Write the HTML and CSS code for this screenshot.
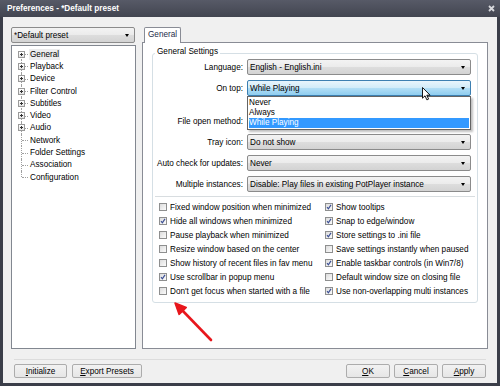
FILE: index.html
```html
<!DOCTYPE html>
<html>
<head>
<meta charset="utf-8">
<title>Preferences</title>
<link rel="stylesheet" href="styles.css">
</head>
<body>
<div class="window">
  <div class="titlebar">
    <span class="title">Preferences - *Default preset</span>
    <svg class="close" viewBox="0 0 7 7" width="7" height="7"><path d="M1 1L6 6M6 1L1 6" stroke="#d8d9dd" stroke-width="1.8"/></svg>
  </div>
  <div class="client">
    <div class="main">
      <div class="left">
        <div class="combo"><span>*Default preset</span><i class="caret"></i></div>
        <ul class="tree">
          <li class="first"><span class="conn"><span class="plus"></span></span><span class="lbl sel">General</span></li>
          <li><span class="conn"><span class="plus"></span></span><span class="lbl">Playback</span></li>
          <li><span class="conn"><span class="plus"></span></span><span class="lbl">Device</span></li>
          <li><span class="conn"><span class="plus"></span></span><span class="lbl">Filter Control</span></li>
          <li><span class="conn"><span class="plus"></span></span><span class="lbl">Subtitles</span></li>
          <li><span class="conn"><span class="plus"></span></span><span class="lbl">Video</span></li>
          <li><span class="conn"><span class="plus"></span></span><span class="lbl">Audio</span></li>
          <li><span class="conn"></span><span class="lbl">Network</span></li>
          <li><span class="conn"></span><span class="lbl">Folder Settings</span></li>
          <li><span class="conn"></span><span class="lbl">Association</span></li>
          <li class="last"><span class="conn"></span><span class="lbl">Configuration</span></li>
        </ul>
      </div>
      <div class="right">
        <div class="tabs"><div class="tab">General</div></div>
        <div class="panel">
          <div class="group">
            <span class="legend">General Settings</span>
            <div class="form">
              <label>Language:</label>
              <div class="combo"><span>English - English.ini</span><i class="caret"></i></div>
              <label>On top:</label>
              <div class="combo focus">
                <span>While Playing</span><i class="caret"></i>
                <ul class="droplist">
                  <li>Never</li>
                  <li>Always</li>
                  <li class="hl">While Playing</li>
                </ul>
                <svg class="cursor" viewBox="0 0 9 14" width="9" height="14"><path d="M0.5 0.5V11.2L3 8.8L4.9 12.9L6.6 12.1L4.8 8.2H8.1Z" fill="#fff" stroke="#000" stroke-width="0.9" stroke-linejoin="round"/></svg>
              </div>
              <label class="spaced">File open method:</label>
              <div class="combo spaced"><span></span><i class="caret"></i></div>
              <label>Tray icon:</label>
              <div class="combo"><span>Do not show</span><i class="caret"></i></div>
              <label>Auto check for updates:</label>
              <div class="combo"><span>Never</span><i class="caret"></i></div>
              <label>Multiple instances:</label>
              <div class="combo"><span>Disable: Play files in existing PotPlayer instance</span><i class="caret"></i></div>
            </div>
            <div class="sep"></div>
            <div class="checks">
              <div class="chk"><i class="box"></i>Fixed window position when minimized</div>
              <div class="chk"><i class="box on"></i>Show tooltips</div>
              <div class="chk"><i class="box on"></i>Hide all windows when minimized</div>
              <div class="chk"><i class="box on"></i>Snap to edge/window</div>
              <div class="chk"><i class="box"></i>Pause playback when minimized</div>
              <div class="chk"><i class="box on"></i>Store settings to .ini file</div>
              <div class="chk"><i class="box"></i>Resize window based on the center</div>
              <div class="chk"><i class="box"></i>Save settings instantly when paused</div>
              <div class="chk"><i class="box"></i>Show history of recent files in fav menu</div>
              <div class="chk"><i class="box on"></i>Enable taskbar controls (in Win7/8)</div>
              <div class="chk"><i class="box on"></i>Use scrollbar in popup menu</div>
              <div class="chk"><i class="box"></i>Default window size on closing file</div>
              <div class="chk"><i class="box"></i>Don't get focus when started with a file</div>
              <div class="chk"><i class="box on"></i>Use non-overlapping multi instances</div>
            </div>
          </div>
          <svg class="redarrow" viewBox="0 0 45 46" width="45" height="46"><path d="M41 42L10 10" stroke="#e8161c" stroke-width="2.6" stroke-linecap="round"/><path d="M5 5L9.1 16.4L16.3 9.4Z" fill="#e8161c" stroke="#e8161c" stroke-width="1.5" stroke-linejoin="round"/></svg>
        </div>
      </div>
    </div>
    <div class="footer">
      <div class="bar">
        <div class="btns">
          <button class="btn w53"><u>I</u>nitialize</button>
          <button class="btn w70"><u>E</u>xport Presets</button>
        </div>
        <div class="btns">
          <button class="btn w44"><u>O</u>K</button>
          <button class="btn w44"><u>C</u>ancel</button>
          <button class="btn w44"><u>A</u>pply</button>
        </div>
      </div>
    </div>
  </div>
</div>
</body>
</html>
```
FILE: styles.css
```css
* { box-sizing: border-box; margin: 0; padding: 0; }
html, body { width: 500px; height: 386px; overflow: hidden; }
body {
  font-family: "Liberation Sans", "Noto Sans", sans-serif;
  font-size: 8.2px;
  color: #000;
  background: #3c3f4b;
}
.window {
  width: 500px; height: 386px;
  display: flex; flex-direction: column;
  background: #3b3e49;
}
.titlebar {
  height: 17px; flex: none;
  display: flex; align-items: center; justify-content: space-between;
  padding: 0 5px 0 7px;
  background: linear-gradient(#575a67, #424550);
  color: #fff; font-weight: bold; font-size: 8.2px;
}
.close { display: block; }
.client {
  flex: 1;
  margin: 0 3px 3px 3px;
  background: #f0f0f0;
  display: flex; flex-direction: column;
  padding-top: 10px;
}
.main { flex: 1; display: flex; gap: 6px; padding: 0 9px 0 8px; min-height: 0; }
.left { width: 125px; display: flex; flex-direction: column; gap: 2px; }
.combo {
  position: relative;
  height: 16px;
  border: 1px solid #8b8b8b;
  border-radius: 2px;
  background: linear-gradient(#f3f3f3, #ebebeb 50%, #dddddd 51%, #d3d3d3);
  display: flex; align-items: center; justify-content: space-between;
  padding: 0 5px 0 2px;
  white-space: nowrap;
}
.left .combo { width: 124px; }
.caret {
  width: 0; height: 0;
  border-left: 2.5px solid transparent;
  border-right: 2.5px solid transparent;
  border-top: 3px solid #000;
}
.combo.focus {
  border-color: #3c7fb1;
  background: linear-gradient(#e8f5fc, #d0ebf9 50%, #b2def6 51%, #8fcdef);
}
.tree {
  flex: 1;
  list-style: none;
  background: #fff;
  border: 1px solid #828790;
  padding: 2px 0 0 5px;
}
.tree li { display: flex; align-items: center; height: 12.3px; }
.conn { position: relative; width: 12px; align-self: stretch; flex: none; }
.conn::before {
  content: ""; position: absolute; left: 4px; top: 0; bottom: 0;
  border-left: 1px dotted #a0a0a0;
}
.tree li.first .conn::before { top: 50%; }
.tree li.last .conn::before { bottom: 50%; }
.conn::after {
  content: ""; position: absolute; left: 5px; width: 6px; top: 50%;
  border-top: 1px dotted #a0a0a0;
}
.plus {
  position: absolute; left: 1px; top: 50%; margin-top: -3.5px;
  width: 7px; height: 7px; z-index: 1;
  border: 1px solid #9a9a9a;
  background:
    linear-gradient(#333, #333) center / 3px 1px no-repeat,
    linear-gradient(#333, #333) center / 1px 3px no-repeat,
    linear-gradient(#fff, #e4e4e4);
}
.lbl { padding: 0 1px; line-height: 11px; }
.lbl.sel { background: #ececec; }
.right { flex: 1; display: flex; flex-direction: column; }
.tabs { height: 15px; padding-left: 2px; display: flex; }
.tab {
  position: relative; z-index: 1;
  width: 37px; height: 16px;
  border: 1px solid #898c95; border-bottom: none;
  border-radius: 2px 2px 0 0;
  background: #fff;
  padding: 2px 0 0 3px;
  color: #1e2d4a;
}
.panel {
  position: relative;
  flex: 1;
  border: 1px solid #898c95;
  background: #fff;
  padding: 10px 9px 0 9px;
}
.group {
  position: relative;
  height: 250px;
  border: 1px solid #d5dfe5;
  border-radius: 3px;
  padding-top: 5px;
}
.legend {
  position: absolute; top: -7px; left: 2px;
  background: #fff; padding: 0 2px;
  color: #000;
}
.form {
  display: grid;
  grid-template-columns: 90px 224px;
  column-gap: 4px; row-gap: 5px;
  align-items: center;
}
.form label { text-align: right; white-space: nowrap; }
.form .spaced { margin-top: 12px; }
.droplist {
  position: absolute; left: -1px; right: -1px; top: 15px;
  z-index: 5;
  list-style: none;
  background: #fff;
  border: 1px solid #646464;
  padding: 1px;
  box-shadow: 2px 2px 2px rgba(0,0,0,0.25);
}
.droplist li { height: 10px; line-height: 10px; padding-left: 0; }
.droplist li.hl { background: #3399ff; color: #fff; }
.cursor { position: absolute; left: 174px; top: 6px; z-index: 6; }
.sep { margin: 4px 2px 0; border-top: 1px solid #d8dde0; }
.checks {
  display: grid;
  grid-template-columns: 166px auto;
  grid-auto-rows: 14px;
  padding: 3px 0 0 6px;
}
.chk { display: flex; align-items: center; gap: 3px; white-space: nowrap; }
.box {
  width: 8px; height: 8px; flex: none;
  border: 1px solid #8e8f8f;
  background: linear-gradient(135deg, #dcdcdc, #fbfbfb);
}
.box.on {
  background:
    url("data:image/svg+xml,%3Csvg xmlns='http://www.w3.org/2000/svg' viewBox='0 0 6 6'%3E%3Cpath d='M1 3.2L2.4 4.8L5 0.9' fill='none' stroke='%233c4f94' stroke-width='1.2'/%3E%3C/svg%3E") center / 6px 6px no-repeat,
    linear-gradient(135deg, #dcdcdc, #fbfbfb);
}
.redarrow { position: absolute; left: 27px; top: 255px; }
.footer { height: 34px; flex: none; padding: 10px 11px 0; }
.bar {
  border-top: 1px solid #dcdcdc;
  padding-top: 4px;
  display: flex; justify-content: space-between;
}
.btns { display: flex; gap: 4px; }
.btns:first-child { gap: 5px; }
.btn {
  height: 14px;
  font-family: inherit; font-size: 8.2px; color: #000;
  border: 1px solid #acacac;
  border-radius: 2px;
  background: linear-gradient(#f2f2f2, #e6e6e6);
  display: flex; align-items: center; justify-content: center;
}
.w53 { width: 53px; }
.w70 { width: 70px; }
.w44 { width: 44px; }
```
